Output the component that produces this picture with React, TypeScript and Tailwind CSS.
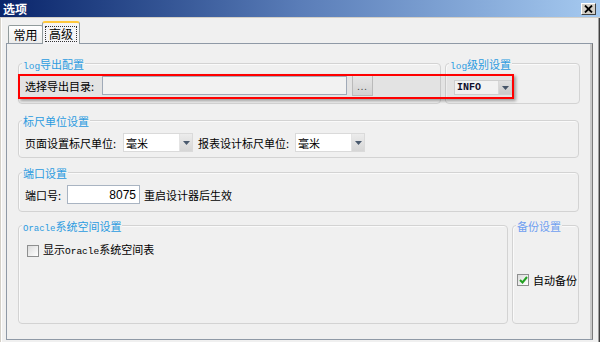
import React from "react";

const CJK = "font-['Noto_Sans_CJK_SC','Noto_Sans',sans-serif]";
const MONO = "font-['Liberation_Mono',monospace]";

function Group({
  title,
  className,
  titleColor = "text-[#2b9be0]",
  children,
}: {
  title: React.ReactNode;
  className: string;
  titleColor?: string;
  children?: React.ReactNode;
}) {
  return (
    <div className={`relative rounded-[4px] border border-[#d3d3d3] shadow-[inset_1px_1px_0_#fafafa] ${className}`}>
      <div className={`absolute left-[3px] top-[-7px] whitespace-nowrap bg-[#f0f0f0] px-[1px] text-[11px] leading-[14px] ${titleColor}`}>
        {title}
      </div>
      {children}
    </div>
  );
}

function Arrow() {
  return (
    <svg width="7" height="4" viewBox="0 0 7 4">
      <path d="M0 0H7L3.5 4Z" fill="#4a5a6e" />
    </svg>
  );
}

function Combo({ value, w, h, mono }: { value: string; w: string; h: string; mono?: boolean }) {
  return (
    <div className={`flex ${w} ${h} border border-[#dadada] bg-white`}>
      <div
        className={`flex flex-1 items-center pl-[2px] ${
          mono ? `${MONO} text-[10px] font-bold text-[#101030]` : "text-[11px]"
        }`}
      >
        {value}
      </div>
      <div className="flex w-[13px] items-center justify-center border-l border-[#e4e4e4] bg-gradient-to-b from-[#ececec] to-[#d6d6d6]">
        <Arrow />
      </div>
    </div>
  );
}

function Checkbox({ checked }: { checked?: boolean }) {
  return (
    <div className="flex h-[12px] w-[12px] items-center justify-center border border-[#8e8f8f] bg-gradient-to-br from-[#dcdcdc] to-[#ffffff]">
      {checked && (
        <svg width="9" height="8" viewBox="0 0 9 8">
          <path d="M1 4L3.5 6.5L8 1" stroke="#21a121" strokeWidth="2" fill="none" />
        </svg>
      )}
    </div>
  );
}

export default function App() {
  return (
    <div className={`flex h-[342px] w-[600px] flex-col overflow-hidden bg-[#f0f0f0] ${CJK} text-black`}>
      {/* Title bar */}
      <div className="flex h-[18px] shrink-0 items-center justify-between border-b border-[#d4d0c8] bg-gradient-to-r from-[#0a246a] via-[#5a7db8] to-[#a6caf0] pl-[3px] pr-[4px]">
        <span className="text-[12px] font-bold leading-[14px] text-white">选项</span>
        <div className="flex h-[12px] w-[15px] items-center justify-center border border-t-white border-l-white border-r-[#404040] border-b-[#404040] bg-[#d4d0c8]">
          <svg width="9" height="8" viewBox="0 0 9 8">
            <path d="M1 0.5L8 7.5M8 0.5L1 7.5" stroke="#000" strokeWidth="1.8" />
          </svg>
        </div>
      </div>

      {/* Body */}
      <div className="flex flex-1 flex-col shadow-[inset_1px_0_0_#d4d0c8,inset_2px_0_0_#ffffff,inset_-1px_0_0_#404040,inset_-2px_0_0_#a0a0a0]">
        {/* Tabs */}
        <div className="flex h-[25px] shrink-0 items-end pl-[8px]">
          <div className="flex h-[18px] w-[35px] items-center justify-center rounded-t-[2px] border border-b-0 border-[#919b9c] bg-gradient-to-b from-[#ffffff] to-[#ececec] text-[12px] leading-[14px]">
            常用
          </div>
          <div className="relative z-10 -mb-[1px] -ml-[1px] flex h-[23px] w-[38px] items-center justify-center rounded-t-[3px] border border-b-0 border-[#919b9c] border-t-2 border-t-[#ffc83c] bg-[#f4f4f6]">
            <div className="border border-dotted border-[#333] px-[3px] text-[12px] leading-[14px]">高级</div>
          </div>
        </div>

        {/* Panel */}
        <div className="ml-[6px] h-[297px] w-[587px] border border-[#8f99a6] border-r-[#7a7a7a] pl-[11px] shadow-[inset_-2px_0_0_#c8c8c8]">
          {/* Row 1 */}
          <div className="relative mt-[19px] flex h-[41px] gap-[4px]">
            <Group
              className="h-full w-[423px]"
              title={
                <>
                  <span className={`${MONO} text-[9.5px]`}>log</span>导出配置
                </>
              }
            >
              <div className="mt-[11px] flex h-[21px] items-center pl-[6px]">
                <div className="w-[77px] text-[11px] leading-[14px]">选择导出目录:</div>
                <div className="h-[19px] w-[245px] border border-[#a9b4c2] bg-white" />
                <div className="ml-[5px] flex h-[21px] w-[21px] items-end justify-center border border-[#c4c4c4] bg-gradient-to-b from-[#f2f2f2] to-[#dedede] pb-[3px] text-[9px] leading-[10px] tracking-[1px] text-[#555]">
                  ...
                </div>
              </div>
            </Group>
            <Group
              className="h-full w-[135px]"
              title={
                <>
                  <span className={`${MONO} text-[9.5px]`}>log</span>级别设置
                </>
              }
            >
              <div className="mt-[16px] pl-[8px]">
                <Combo value="INFO" w="w-[58px]" h="h-[15px]" mono />
              </div>
            </Group>
            {/* annotation highlight */}
            <div className="pointer-events-none absolute left-0 top-[11px] h-[25px] w-[496px] border-2 border-[#ff0000] bg-black/[0.05] shadow-[2px_2px_3px_rgba(0,0,0,0.35)]" />
          </div>

          {/* Row 2 */}
          <Group className="mt-[16px] h-[38px] w-[561px]" title="标尺单位设置">
            <div className="mt-[12px] flex h-[19px] items-center pl-[6px] text-[11px] leading-[14px]">
              <div className="w-[98px]">页面设置标尺单位:</div>
              <Combo value="毫米" w="w-[70px]" h="h-[19px]" />
              <div className="ml-[5px] w-[97px]">报表设计标尺单位:</div>
              <Combo value="毫米" w="w-[70px]" h="h-[19px]" />
            </div>
          </Group>

          {/* Row 3 */}
          <Group className="mt-[14px] h-[40px] w-[561px]" title="端口设置">
            <div className="mt-[12px] flex h-[19px] items-center pl-[6px] text-[11px] leading-[14px]">
              <div className="w-[42px]">端口号:</div>
              <div className="flex h-[19px] w-[73px] items-center justify-end border border-[#a9b4c2] bg-white pr-[3px] font-['Liberation_Sans',sans-serif] text-[12px]">
                8075
              </div>
              <div className="ml-[4px]">重启设计器后生效</div>
            </div>
          </Group>

          {/* Row 4 */}
          <div className="mt-[13px] flex h-[99px] gap-[4px]">
            <Group
              className="h-full w-[490px]"
              title={
                <>
                  <span className={`${MONO} text-[9px]`}>Oracle</span>系统空间设置
                </>
              }
            >
              <div className="mt-[16px] flex items-center gap-[4px] pl-[8px] text-[11px] leading-[14px]">
                <Checkbox />
                <span>
                  显示<span className={`${MONO} text-[9.5px]`}>Oracle</span>系统空间表
                </span>
              </div>
            </Group>
            <Group className="h-full w-[67px]" title="备份设置" titleColor="text-[#6f9ff0]">
              <div className="mt-[47px] flex items-center gap-[4px] pl-[4px] text-[11px] leading-[14px]">
                <Checkbox checked />
                <span>自动备份</span>
              </div>
            </Group>
          </div>
        </div>
      </div>
    </div>
  );
}
